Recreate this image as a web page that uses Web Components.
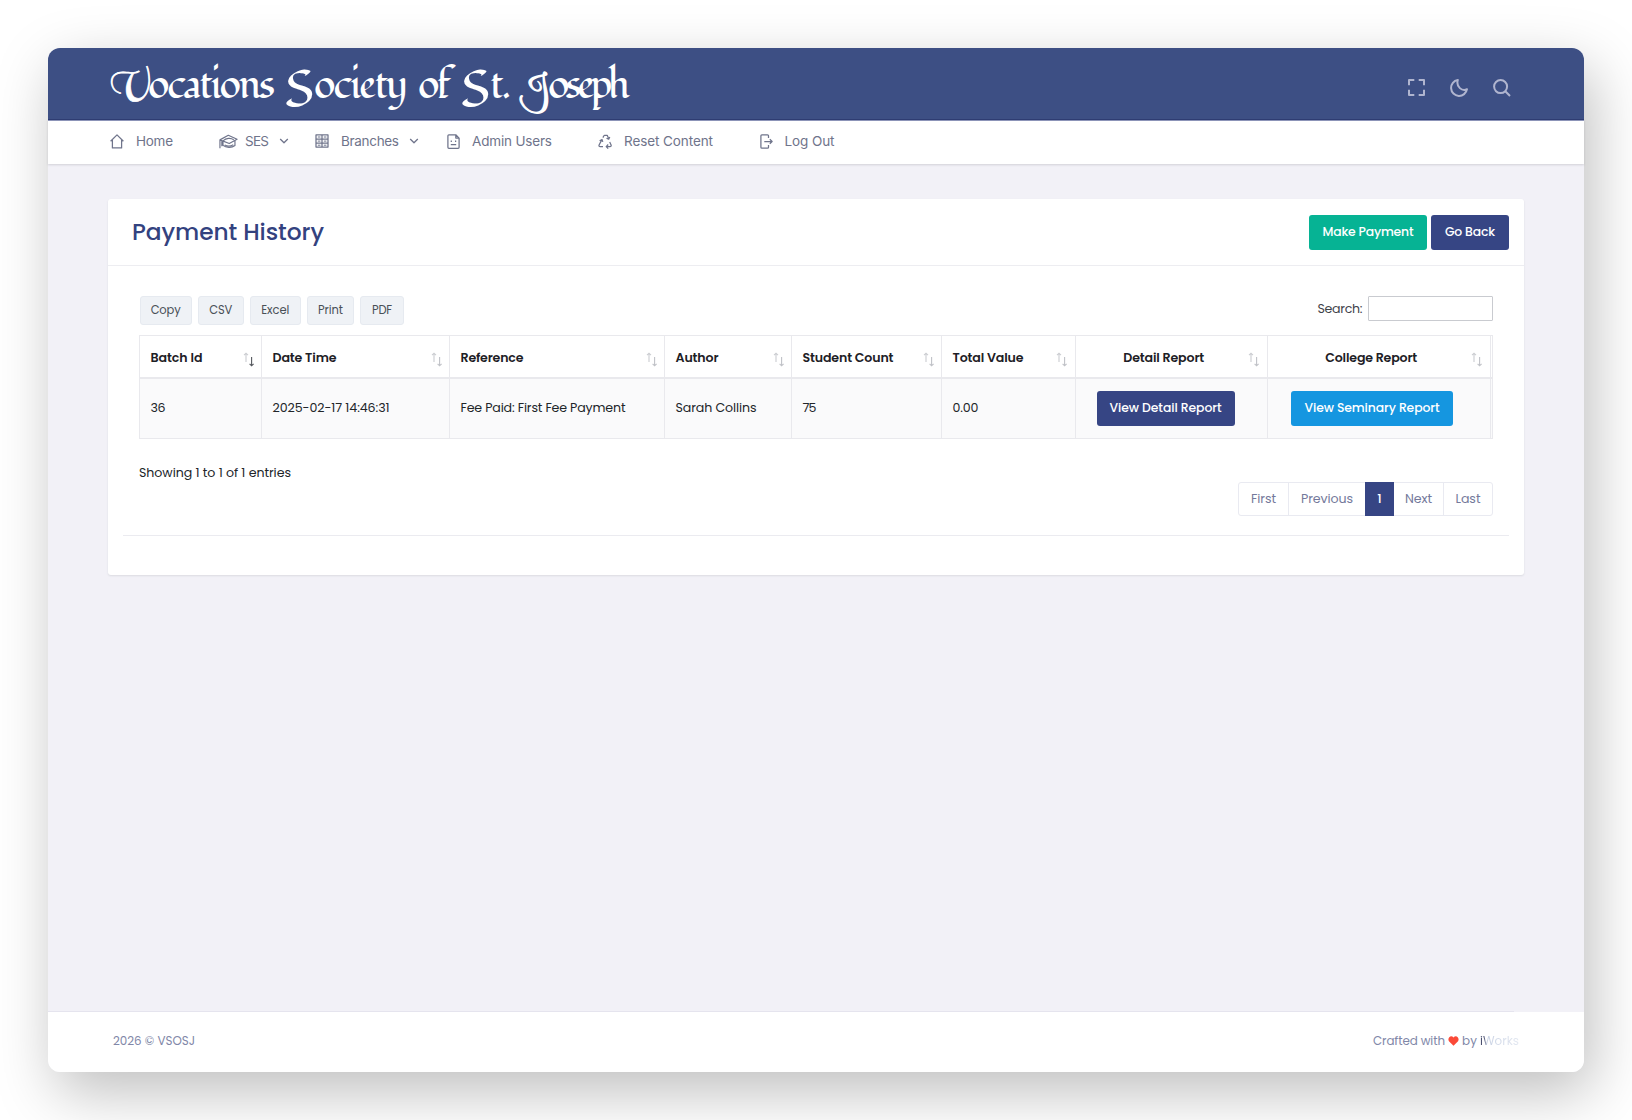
<!DOCTYPE html>
<html lang="en">
<head>
<meta charset="utf-8">
<title>Payment History</title>
<style>
html,body{margin:0;height:100%}
body{box-sizing:border-box;padding:48px;height:1120px;overflow:hidden;background:#fff;font-family:Poppins,Inter,"Open Sans",sans-serif;font-size:12.600px;color:#212529}
</style>
</head>
<body>
<admin-app></admin-app>
<script>
const define=(name,html,after)=>customElements.define(name,class extends HTMLElement{
  connectedCallback(){
    if(this.shadowRoot)return;
    const root=this.attachShadow({mode:'open'});
    root.innerHTML=typeof html==='function'?html(this):html;
    if(after)after(this,root);
  }
});

/* Text run whose tracking is adjusted to fill a given width */
define('fit-text',`<style>:host{display:inline-block;white-space:nowrap;flex:none}span{display:inline-block}</style><span><slot></slot></span>`,(el,root)=>{
  const w=parseFloat(el.getAttribute('w')),s=root.querySelector('span');
  const n=el.textContent.length,nat=s.getBoundingClientRect().width;
  s.style.letterSpacing=((w-nat)/Math.max(1,n-1)).toFixed(3)+'px';
  el.style.width=w+'px';
});

const icons={
  home:['0 0 14 15','<path d="M.6 7.200 7 .9l6.400 6.300M2.400 6v7.900h9.200V6"/>',14,15],
  cap:['0 0 20 15','<path d="M1 5.800 9.800 1 19 5.200 10.800 9.600zM1 5.800v8.700M3 7v5.400M4.200 8v3.600c3.200 2.600 9.200 2.800 12.600.2V6.800M4.600 6.600c2.600-2.900 8-3.300 11-.8M6 11.200c3 1.400 6.500 1.200 9-.4"/>',19,15],
  grid:['0 0 14 14','<path d="M1 .9h12v12.200H1zM7 .9v12.200M1 5h12M1 9.200h12"/><path d="M2.800 3h2.600M8.800 3h2.600M2.800 7.100h2.600M8.800 7.100h2.600M2.800 11.200h2.600M8.800 11.200h2.600" stroke-width="1"/>',14,14],
  file:['0 0 13 15','<path d="M1.900 .8h6.900l3.300 3.300v9.200c0 .6-.4 1-1 1H1.900c-.6 0-1-.4-1-1V1.800c0-.6.4-1 1-1zM8.800 .8v3.300h3.300M4.300 6.400v1.500M8.600 6.400v1.500M3.800 10.600h5.400"/>',13,15],
  recycle:['0 0 14 15','<path d="M4.900 3.600 5.900 1.700c.1-.3.400-.4.700-.4h2.600l1.500 3.500M11.800 3 10.700 5.200 8.500 4.200M3.900 5.600 1.100 11c-.4.900.1 1.600 1 1.600H5M1.600 6.700l2.400-1.200.8 2.400M11.700 8l1.400 2.900c.3.900-.2 1.700-1.100 1.700H8.400M10.200 10.500 8.200 12.600l2 2"/>',14,15],
  logout:['0 0 13 15','<path d="M8.500 4V1.800c0-.6-.4-1-1-1H1.900c-.6 0-1 .4-1 1v11.400c0 .6.400 1 1 1h5.600c.6 0 1-.4 1-1V11M4.300 7.500h7.700M9.800 5.200l2.300 2.300-2.300 2.300"/>',13,15],
  chevron:['0 0 10 6','<path d="m1.200 1 3.800 3.800L8.800 1"/>',10,6],
  full:['0 0 17 17','<path d="M1 6.300V1h5.300M10.700 1H16v5.300M16 10.700V16h-5.300M6.300 16H1v-5.300"/>',17,17],
  moon:['0 0 18 18','<path d="M7.800 1A8 8 0 1 0 17 10.200c-4.800 2.400-11.200-2.200-9.200-9.200z"/>',18,18],
  search:['0 0 18 18','<circle cx="7.600" cy="7.600" r="6.500"/><path d="m12.300 12.300 4.700 4.700"/>',18,18]
};
define('ui-icon',el=>{const [v,p,w,h]=icons[el.getAttribute('name')];
  return `<style>:host{display:block;flex:none;width:${w}px;height:${h}px}svg{display:block;fill:none;stroke:currentColor;stroke-width:var(--sw,1.25);stroke-linejoin:round}</style><svg width="${w}" height="${h}" viewBox="${v}">${p}</svg>`});

define('brand-bar',`<style>
:host{display:flex;height:72px;box-sizing:border-box;background:#3d4f84;border-bottom:1px solid #2f3d74;align-items:center;justify-content:space-between;padding:0 73px 0 62px;color:#fff}
h1{margin:0;display:flex;align-items:baseline;gap:10px;font:400 40px/50px Fondamento,"Liberation Serif",serif;padding-top:5px}
.w{display:flex;align-items:baseline}
b{font-weight:400;display:block;white-space:nowrap;line-height:50px}
.v{font-family:Sail,Fondamento,serif;font-size:43px;width:38px;transform:translateX(-3px) skewX(9deg);-webkit-text-stroke:.8px #fff}
.s{font-size:51px;width:29px;transform:translateY(9px)}
.j{font-family:"Great Vibes",Fondamento,serif;font-size:31px;width:27px;transform:translate(-4px,1px) skewX(28deg) scaleY(1.120);-webkit-text-stroke:1.100px #fff}
nav{display:flex;gap:25px;color:#b0b5cf;--sw:2;padding-top:8px}
</style><h1><span class="w"><b class="v">V</b><fit-text w="127">ocations</fit-text></span> <span class="w"><b class="s">S</b><fit-text w="94">ociety</fit-text></span> <fit-text w="33">of</fit-text> <span class="w"><b class="s">S</b><fit-text w="21">t.</fit-text></span> <span class="w"><b class="j">J</b><fit-text w="82">oseph</fit-text></span></h1><nav><ui-icon name="full"></ui-icon><ui-icon name="moon"></ui-icon><ui-icon name="search"></ui-icon></nav>`);

define('nav-item',el=>`<style>
:host{display:flex;align-items:center;height:100%;margin-left:${el.getAttribute('lead')}px}
fit-text{margin-left:${el.getAttribute('gap')}px}
ui-icon[name=chevron]{margin-left:10px;--sw:1.3}
</style><ui-icon name="${el.getAttribute('icon')}"></ui-icon><fit-text w="${el.getAttribute('w')}">${el.getAttribute('label')}</fit-text>${el.hasAttribute('menu')?'<ui-icon name="chevron"></ui-icon>':''}`);

define('main-nav',`<style>
:host{display:flex;height:44px;padding:0 0 3px 62px;box-sizing:border-box;background:#fff;box-shadow:0 1px 2px rgba(50,50,60,.16);position:relative;font:400 13.500px/20px Inter,sans-serif;color:#6f748b;border-top:1px solid #8c94b8}
</style>
<nav-item lead="0" icon="home" gap="12" w="37" label="Home"></nav-item>
<nav-item lead="46" icon="cap" gap="7" w="24" label="SES" menu></nav-item>
<nav-item lead="26" icon="grid" gap="12" w="58" label="Branches" menu></nav-item>
<nav-item lead="28" icon="file" gap="12" w="80" label="Admin Users"></nav-item>
<nav-item lead="46" icon="recycle" gap="12" w="89" label="Reset Content"></nav-item>
<nav-item lead="46.500" icon="logout" gap="12" w="50" label="Log Out"></nav-item>`);

define('ui-button',el=>`<style>
:host{display:flex;flex:none;align-items:center;justify-content:center;box-sizing:border-box;width:${el.getAttribute('bw')}px;height:35px;border-radius:3px;color:#fff;background:#364584;font-weight:500;font-size:12.400px;line-height:20px}
:host([kind=success]){background:#06b394}
:host([kind=info]){background:#1596e0}
:host([raised]){padding-bottom:2px}
:host([kind=light]){height:29px;background:#eff2f6;border:1px solid #e6eaf0;color:#495057;font-weight:400;font-size:11.500px;padding-bottom:1px}
</style><fit-text w="${el.getAttribute('tw')}">${el.getAttribute('label')}</fit-text>`);

define('sort-mark',el=>`<style>:host{display:block;flex:none}svg{display:block;fill:none;stroke:#cbcdd1;stroke-width:1.1}.d{stroke:${el.hasAttribute('on')?'#55585e':'#c0c2c7'}}</style><svg width="12" height="15" viewBox="0 0 12 15"><path d="M3 10V1.200M1 3.200l2-2 2 2"/><path class="d" d="M8.600 5v8.800M6.600 11.800l2 2 2-2"/></svg>`);

const cols=[
 ['Batch Id',52,122,'36',15],['Date Time',64,188,'2025-02-17 14:46:31',117],['Reference',63,215,'Fee Paid: First Fee Payment',165],
 ['Author',43,127,'Sarah Collins',81],['Student Count',91,150,'75',14],['Total Value',71,133.500,'0.00',26],
 ['Detail Report',81,192,'<ui-button raised bw="138" tw="112" label="View Detail Report"></ui-button>'],
 ['College Report',92,223,'<ui-button raised kind="info" bw="162" tw="135" label="View Seminary Report"></ui-button>']];
define('data-table',()=>`<style>
:host{display:grid;box-sizing:border-box;width:1354px;grid-template-columns:${cols.map(c=>c[2]+'px').join(' ')} 1fr;grid-template-rows:43px 59px;border:1px solid #e9e9ed;margin-top:10px;line-height:20px}
div{box-sizing:border-box;border-right:1px solid #e9e9ed;display:flex;align-items:center;padding-left:10.500px}
.h{font-weight:600;color:#1d2025;border-bottom:2px solid #e9e9ed;justify-content:space-between;padding-right:6.500px}
.h fit-text{padding-top:2px}
.h sort-mark{padding-top:5px}
.h.c{padding-left:4px}
.h.c:before{content:""}
.b{background:#fafafb}
.b fit-text{padding-bottom:1.500px}
.b.c{justify-content:center;padding:0 13px 0 0}.b.c.n{padding-right:11px}
div.l{border-right:0;padding:0}
</style>${cols.map((c,i)=>`<div class="h ${i>5?'c':''}"><fit-text w="${c[1]}">${c[0]}</fit-text><sort-mark ${i?'':'on'}></sort-mark></div>`).join('')}<div class="h l"></div>${cols.map((c,i)=>`<div class="b ${i>5?'c':''} ${i==6?'n':''}">${c[4]?`<fit-text w="${c[4]}">${c[3]}</fit-text>`:c[3]}</div>`).join('')}<div class="b l"></div>`);

define('page-list',`<style>
:host{display:flex;height:34px;box-sizing:border-box;border:1px solid #e9eaf1;border-radius:3px;width:255px;color:#74799b;line-height:20px}
div{display:flex;align-items:center;justify-content:center;box-sizing:border-box;border-right:1px solid #e9eaf1}
.on{background:#364584;color:#fff;margin:-1px 0;border:0;font-weight:500}
</style><div style="width:50px"><fit-text w="25">First</fit-text></div><div style="width:76px;border:0"><fit-text w="52">Previous</fit-text></div><div class="on" style="width:29px">1</div><div style="width:50px"><fit-text w="27">Next</fit-text></div><div style="flex:1;border:0"><fit-text w="25">Last</fit-text></div>`);

define('payment-card',`<style>
:host{display:block;box-sizing:border-box;width:1415.500px;height:376px;background:#fff;border-radius:3px;box-shadow:0 1px 2px rgba(56,65,74,.12)}
header{display:flex;height:67px;box-sizing:border-box;align-items:center;border-bottom:1px solid #ededf1;padding:0 14.500px 0 24px;gap:4px}
h2{margin:0 auto 0 0;font-size:23.300px;font-weight:500;line-height:34px;color:#33427f}
.tools{display:flex;padding:30px 31px 0 31.500px;gap:6px;line-height:20px}
.search{margin-left:auto;display:flex;gap:5.500px;align-items:center;height:25px;color:#3f434a}
input{box-sizing:border-box;width:124.500px;height:25px;border:1px solid #c9cbd0;border-radius:1px;padding:0;margin:0;background:#fff}
.body{padding-left:31px}
.foot{display:flex;justify-content:space-between;padding:24px 30.500px 0 31px;line-height:20px}
page-list{margin-top:19px}
hr{border:0;border-top:1px solid #ebebf0;margin:19px 15px 0}
</style>
<header><h2><fit-text w="192">Payment History</fit-text></h2><ui-button kind="success" bw="118" tw="91" label="Make Payment"></ui-button><ui-button bw="78" tw="50" label="Go Back"></ui-button></header>
<div class="tools"><ui-button kind="light" bw="52.300" tw="30" label="Copy"></ui-button><ui-button kind="light" bw="46" tw="23" label="CSV"></ui-button><ui-button kind="light" bw="51" tw="28" label="Excel"></ui-button><ui-button kind="light" bw="47.300" tw="25" label="Print"></ui-button><ui-button kind="light" bw="44" tw="20" label="PDF"></ui-button>
<label class="search"><fit-text w="45">Search:</fit-text><input type="text"></label></div>
<div class="body"><data-table></data-table></div>
<div class="foot"><fit-text w="152">Showing 1 to 1 of 1 entries</fit-text><page-list></page-list></div><hr>`);

define('page-footer',`<style>
:host{display:flex;box-sizing:border-box;height:60px;background:#fff;padding:0 65px 3px;align-items:center;color:#8187a8;font-size:11.900px;line-height:20px}
.r{display:flex;align-items:center;margin-left:auto}
svg{margin:0 3px 0 3px}
.w{margin-left:3px;background:linear-gradient(90deg,#4b5070 0,#4b5070 4px,#c9d2e4 7px,#e3e8f1);-webkit-background-clip:text;background-clip:text;color:transparent}
</style><fit-text w="82">2026 © VSOSJ</fit-text><div class="r"><fit-text w="72">Crafted with</fit-text><svg width="11" height="10" viewBox="-.2 -.2 10.400 9.400"><path fill="#fb4a38" d="M5 9 .7 4.700C-1.200 2 2.500-1.800 5 1.200 7.500-1.800 11.200 2 9.300 4.700z"/></svg><fit-text w="15">by</fit-text><fit-text class="w" w="39">iWorks</fit-text></div>`);

define('admin-app',`<style>
:host{display:flex;flex-direction:column;width:1536px;height:1024px;border-radius:12px;box-shadow:8px 20px 60px rgba(0,0,0,.26);background:#f2f1f7}
brand-bar{border-radius:12px 12px 0 0}
page-footer{border-radius:0 0 12px 12px}
payment-card{margin:35px 0 0 60px}
.line{margin-top:auto;width:1466px;height:1px;background:#e5e4ee}
</style><brand-bar></brand-bar><main-nav></main-nav><payment-card></payment-card><div class="line"></div><page-footer></page-footer>`);
</script>
</body>
</html>
